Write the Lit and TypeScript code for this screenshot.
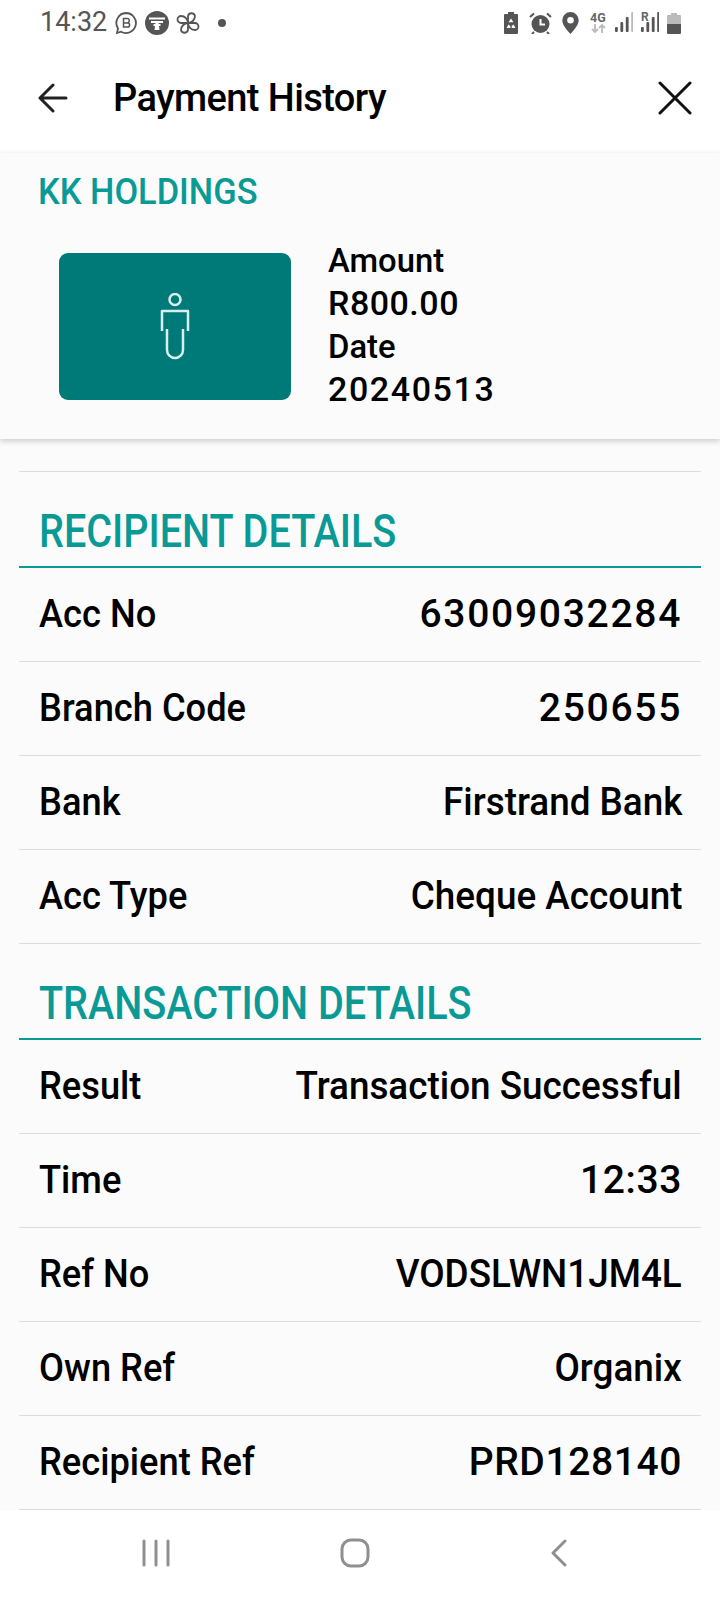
import { LitElement, css, html, svg } from 'lit';
import { customElement } from 'lit/decorators.js';

const recipient = [
  ['Acc No', '63009032284', 'num'],
  ['Branch Code', '250655', 'num'],
  ['Bank', 'Firstrand Bank', ''],
  ['Acc Type', 'Cheque Account', ''],
] as const;

const transaction = [
  ['Result', 'Transaction Successful', ''],
  ['Time', '12:33', 'tight'],
  ['Ref No', 'VODSLWN1JM4L', ''],
  ['Own Ref', 'Organix', ''],
  ['Recipient Ref', 'PRD128140', 'tight'],
] as const;

const signal = (heights: number[], active: number) => svg`
  ${heights.map(
    (h, i) => svg`<rect x=${i * 5.4} y=${20 - h} width="2.8" height=${h} rx="1" fill=${i < active ? '#555' : '#bbb'}></rect>`
  )}
`;

@customElement('app-root')
class AppRoot extends LitElement {
  static styles = css`
    :host {
      display: block;
      width: 720px;
      height: 1600px;
      background: #fff;
      font-family: Roboto, 'Liberation Sans', sans-serif;
      color: #000;
      overflow: hidden;
    }

    .page {
      height: 1600px;
      display: flex;
      flex-direction: column;
    }

    .status {
      height: 46px;
      box-sizing: border-box;
      padding: 0 39px 0 40px;
      display: flex;
      align-items: center;
      color: #555;
      flex: none;
    }

    .time {
      font-size: 27px;
      width: 74px;
      margin-bottom: 2px;
    }

    .status-left,
    .status-right {
      display: flex;
      align-items: center;
    }

    .status-left {
      gap: 7px;
    }

    .status-right {
      margin-left: auto;
      gap: 8px;
    }

    .status-right .wide {
      margin-right: 2px;
    }

    .status-right .wider {
      margin-right: 3px;
    }

    .dot {
      width: 8px;
      height: 8px;
      border-radius: 50%;
      background: #555;
      margin-left: 11px;
    }

    .header {
      height: 107px;
      flex: none;
      display: flex;
      align-items: center;
      padding: 0 28px 4px 38px;
      box-sizing: border-box;
    }

    .title {
      font-size: 38px;
      font-weight: 500;
      margin-left: 45px;
      flex: 1;
      letter-spacing: -0.6px;
      white-space: nowrap;
    }

    .card {
      height: 286px;
      flex: none;
      background: #fbfbfb;
      box-sizing: border-box;
      padding: 21px 0 0 38px;
      box-shadow: 0 2px 6px rgba(0, 0, 0, 0.2);
      position: relative;
    }

    .name {
      font-size: 36px;
      font-weight: 500;
      line-height: 36px;
      color: #0a9a96;
      transform: scaleX(0.955);
      transform-origin: left center;
      white-space: nowrap;
    }

    .summary {
      display: flex;
      gap: 37px;
      margin: 32px 0 0 21px;
      align-items: center;
    }

    .tile {
      width: 232px;
      height: 147px;
      border-radius: 9px;
      background: #007a78;
      display: flex;
      align-items: center;
      justify-content: center;
    }

    .amount {
      font-size: 34px;
      font-weight: 500;
      line-height: 43px;
      margin-top: -3px;
    }

    .amount .word {
      transform: scaleX(0.965);
      transform-origin: left center;
    }

    .amount .digits {
      letter-spacing: 1.6px;
    }

    .amount .money {
      letter-spacing: 0.5px;
    }

    .body {
      flex: 1;
      background: #fbfbfb;
      padding: 32px 19px 0;
      display: flex;
      flex-direction: column;
    }

    .top-rule {
      border-top: 1px solid #dcdcdc;
    }

    .section-title {
      height: 96px;
      box-sizing: border-box;
      border-bottom: 2px solid #0a9a96;
      font-size: 46px;
      font-weight: 500;
      line-height: 46px;
      color: #0a9a96;
      padding: 36px 0 0 20px;
      white-space: nowrap;
    }

    .section-title span {
      display: inline-block;
      transform: scaleX(0.86);
      transform-origin: left center;
    }

    .row {
      height: 94px;
      box-sizing: border-box;
      border-bottom: 1px solid #dcdcdc;
      padding: 0 19px 2px 20px;
      display: flex;
      align-items: center;
      justify-content: space-between;
      font-size: 39px;
      font-weight: 500;
      white-space: nowrap;
    }

    .label {
      transform: scaleX(0.93);
      transform-origin: left center;
    }

    .value {
      transform: scaleX(0.945);
      transform-origin: right center;
    }

    .value.num {
      transform: none;
      letter-spacing: 1.7px;
    }

    .value.tight {
      transform: none;
      letter-spacing: 0.6px;
    }

    .nav {
      height: 90px;
      flex: none;
      background: #fff;
      display: grid;
      grid-template-columns: 155px 1fr 155px;
      align-items: center;
      padding: 0 153px 4px 142px;
      box-sizing: border-box;
      justify-items: center;
    }

    .nav .first {
      justify-self: start;
    }

    .nav .last {
      justify-self: end;
    }

    svg {
      display: block;
    }
  `;

  _row(row: readonly [string, string, string]) {
    return html`
      <div class="row">
        <span class="label">${row[0]}</span>
        <span class="value ${row[2]}">${row[1]}</span>
      </div>
    `;
  }

  render() {
    return html`
      <div class="page">
        <div class="status">
          <span class="time">14:32</span>
          <div class="status-left">
            <svg width="24" height="24" viewBox="0 0 24 24" fill="none" stroke="#555" stroke-width="1.8">
              <path d="M12 2a10 10 0 1 1-5 18.7L3 22l1-4.6A10 10 0 0 1 12 2z" />
              <path d="M9.5 7.5h3.6a2 2 0 0 1 0 4.4H9.5zM9.5 11.900h4a2.100 2.100 0 0 1 0 4.200h-4z" stroke-width="1.5" />
            </svg>
            <svg width="24" height="24" viewBox="0 0 24 24">
              <circle cx="12" cy="12" r="12" fill="#555" />
              <path d="M4 7.5h16M6 11h12M8.500 14h7" stroke="#fff" stroke-width="2" />
              <path d="M10.500 11l-1 8h5l-1-8z" fill="#fff" />
            </svg>
            <svg width="24" height="24" viewBox="0 0 24 24" fill="none" stroke="#555" stroke-width="1.800">
              <path d="M12 12V5a3.600 3.600 0 0 1 7 0c0 4-3.500 7-7 7h7a3.500 3.500 0 0 1 0 7c-4 0-7-3.500-7-7v7a3.600 3.600 0 0 1-7 0c0-4 3.500-7 7-7H5a3.500 3.500 0 0 1 0-7c4 0 7 3.500 7 7z" />
            </svg>
            <span class="dot"></span>
          </div>
          <div class="status-right">
            <svg class="wide" width="16" height="22" viewBox="0 0 16 22">
              <path d="M5 0h6v2h3a1 1 0 0 1 1 1v18a1 1 0 0 1-1 1H2a1 1 0 0 1-1-1V3a1 1 0 0 1 1-1h3z" fill="#555" />
              <path d="M8 6.500l2.500 3.800H5.500zM3.500 16l2-3.500 1.800 1.500v2zM12.500 16l-2-3.500-1.800 1.500v2z" fill="#fff" />
            </svg>
            <svg class="wide" width="23" height="22" viewBox="0 0 23 22">
              <circle cx="11.500" cy="12" r="9" fill="#555" />
              <path d="M11.500 7v5.500H16" stroke="#fff" stroke-width="2" fill="none" />
              <path d="M1 5l4-3.500M22 5l-4-3.500M5 20l-2 2M18 20l2 2" stroke="#555" stroke-width="2" />
            </svg>
            <svg class="wider" width="17" height="22" viewBox="0 0 17 22">
              <path d="M8.500 0a8.200 8.200 0 0 1 8.200 8.200c0 5-5 10-8.200 13.800C5 18.200.3 13.200.3 8.200A8.200 8.200 0 0 1 8.500 0z" fill="#555" />
              <circle cx="8.500" cy="8.200" r="3.300" fill="#fff" />
            </svg>
            <svg width="17" height="26" viewBox="0 -2 17 26">
              <text x="0" y="10" font-size="12.500" font-weight="700" font-family="Roboto" fill="#666">4G</text>
              <path d="M5 12v8M2 17l3 3 3-3" stroke="#bbb" stroke-width="1.800" fill="none" />
              <path d="M12 21v-8M9 16l3-3 3 3" stroke="#bbb" stroke-width="1.800" fill="none" />
            </svg>
            <svg width="18" height="22" viewBox="0 0 18 22">${signal([5, 10, 15, 20], 3)}</svg>
            <svg width="18" height="28" viewBox="0 -3 18 28">
              <text x="0" y="9" font-size="12" font-weight="700" font-family="Roboto" fill="#666">R</text>
              ${signal([5, 10, 15, 20], 4)}
            </svg>
            <svg width="14" height="21" viewBox="0 0 14 21">
              <path d="M4 0h6v2h3a1 1 0 0 1 1 1v8H0V3a1 1 0 0 1 1-1h3z" fill="#bbb" />
              <path d="M0 11h14v9a1 1 0 0 1-1 1H1a1 1 0 0 1-1-1z" fill="#555" />
            </svg>
          </div>
        </div>

        <div class="header">
          <svg width="30" height="30" viewBox="0 0 30 30" fill="none" stroke="#222" stroke-width="3" stroke-linecap="round" stroke-linejoin="round">
            <path d="M2 15h26M15 2L2 15l13 13" />
          </svg>
          <span class="title">Payment History</span>
          <svg width="34" height="34" viewBox="0 0 34 34" fill="none" stroke="#111" stroke-width="3" stroke-linecap="round">
            <path d="M2 2l30 30M32 2L2 32" />
          </svg>
        </div>

        <div class="card">
          <div class="name">KK HOLDINGS</div>
          <div class="summary">
            <div class="tile">
              <svg width="30" height="68" viewBox="0 0 30 68" fill="none" stroke="#d8efed" stroke-width="2.500" stroke-linejoin="round">
                <circle cx="15" cy="6.500" r="5.500" />
                <path d="M2 38V18h26v20" />
                <path d="M7 36v21a8 8 0 0 0 16 0V36" />
              </svg>
            </div>
            <div class="amount">
              <div class="word">Amount</div>
              <div class="money">R800.00</div>
              <div class="word">Date</div>
              <div class="digits">20240513</div>
            </div>
          </div>
        </div>

        <div class="body">
          <div class="top-rule"></div>
          <div class="section-title"><span>RECIPIENT DETAILS</span></div>
          ${recipient.map((r) => this._row(r))}
          <div class="section-title"><span>TRANSACTION DETAILS</span></div>
          ${transaction.map((r) => this._row(r))}
        </div>

        <div class="nav">
          <svg class="first" width="28" height="28" viewBox="0 0 28 28" stroke="#8f8f8f" stroke-width="3" stroke-linecap="round">
            <path d="M2 2v24M14 2v24M26 2v24" />
          </svg>
          <svg width="30" height="30" viewBox="0 0 30 30" fill="none" stroke="#8f8f8f" stroke-width="3">
            <rect x="2" y="2" width="26" height="26" rx="9" />
          </svg>
          <svg class="last" width="16" height="28" viewBox="0 0 16 28" fill="none" stroke="#8f8f8f" stroke-width="3" stroke-linecap="round" stroke-linejoin="round">
            <path d="M14 2L2 14l12 12" />
          </svg>
        </div>
      </div>
    `;
  }
}

export default AppRoot;
